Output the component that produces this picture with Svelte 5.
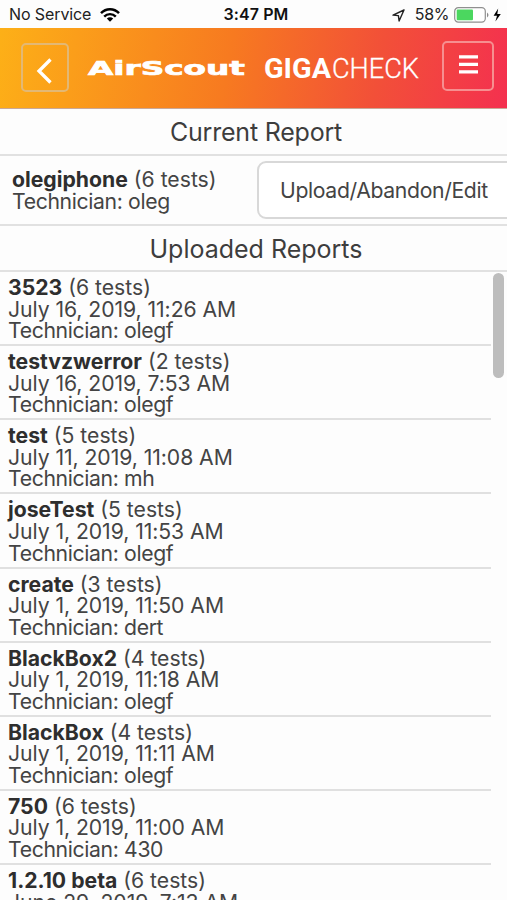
<script>
  const current = { name: 'olegiphone', tests: 6, technician: 'oleg' };

  const reports = [
    { name: '3523', tests: 6, date: 'July 16, 2019, 11:26 AM', technician: 'olegf' },
    { name: 'testvzwerror', tests: 2, date: 'July 16, 2019, 7:53 AM', technician: 'olegf' },
    { name: 'test', tests: 5, date: 'July 11, 2019, 11:08 AM', technician: 'mh' },
    { name: 'joseTest', tests: 5, date: 'July 1, 2019, 11:53 AM', technician: 'olegf' },
    { name: 'create', tests: 3, date: 'July 1, 2019, 11:50 AM', technician: 'dert' },
    { name: 'BlackBox2', tests: 4, date: 'July 1, 2019, 11:18 AM', technician: 'olegf' },
    { name: 'BlackBox', tests: 4, date: 'July 1, 2019, 11:11 AM', technician: 'olegf' },
    { name: '750', tests: 6, date: 'July 1, 2019, 11:00 AM', technician: '430' },
    { name: '1.2.10 beta', tests: 6, date: 'June 29, 2019, 7:13 AM', technician: 'olegf' },
  ];
</script>

<div class="screen">
  <div class="status-bar">
    <div class="carrier">
      <span>No Service</span>
      <svg width="20" height="14" viewBox="0 0 20 14">
        <path d="M1 5.2C6 0 14 0 19 5.2" fill="none" stroke="#000" stroke-width="2.5" />
        <path d="M4.2 8.6C7.4 5.3 12.6 5.3 15.8 8.6" fill="none" stroke="#000" stroke-width="2.4" />
        <path d="M6.8 10.6C8.6 8.8 11.4 8.8 13.2 10.6L10 13.8Z" />
      </svg>
    </div>
    <div class="time">3:47 PM</div>
    <div class="power">
      <svg class="location" width="13" height="13" viewBox="0 0 13 13">
        <path d="M12 1 1 6.1 6.4 6.6 7.1 12Z" fill="none" stroke="#222" stroke-width="1.4" stroke-linejoin="round" />
      </svg>
      <span class="percent">58%</span>
      <svg width="48" height="16" viewBox="0 0 48 16">
        <rect x=".7" y=".7" width="30.6" height="14.4" rx="3.6" fill="#fff" stroke="#8f8f8f" stroke-width="1.2" />
        <rect x="2.7" y="2.6" width="16.3" height="10.6" rx="1" fill="#4bd75f" />
        <path d="M33 5.5Q36 8 33 10.5Z" fill="#888" />
        <path d="M44.2 1.6 39.6 8.8H43L41.4 14.4 46.8 7H43.3Z" />
      </svg>
    </div>
  </div>

  <header>
    <button class="nav-btn back" aria-label="Back">
      <svg width="18" height="28" viewBox="0 0 18 28">
        <path d="M15.5 2.5 4 14 15.5 25.5" fill="none" stroke="#fff" stroke-width="3.3" />
      </svg>
    </button>
    <svg class="logo" width="336" height="40" viewBox="0 0 336 40">
      <text class="airscout" x="2" y="27" textLength="157" lengthAdjust="spacingAndGlyphs">AirScout</text>
      <text class="giga" x="178" y="30" textLength="67" lengthAdjust="spacingAndGlyphs">GIGA</text>
      <text class="check" x="246" y="30" textLength="87" lengthAdjust="spacingAndGlyphs">CHECK</text>
    </svg>
    <button class="nav-btn menu" aria-label="Menu">
      <svg width="19" height="19" viewBox="0 0 19 19">
        <path d="M0 1.9H19M0 9.4H19M0 16.9H19" stroke="#fff" stroke-width="3.4" />
      </svg>
    </button>
  </header>

  <h2>Current Report</h2>
  <div class="current">
    <div class="details">
      <div><b>{current.name}</b> ({current.tests} tests)</div>
      <div class="technician">Technician: {current.technician}</div>
    </div>
    <button class="action">Upload/Abandon/Edit</button>
  </div>

  <h2 class="uploaded">Uploaded Reports</h2>
  <div class="list">
    <div class="rows">
      {#each reports as report}
        <div class="report">
          <div><b>{report.name}</b> ({report.tests} tests)</div>
          <div class="date">{report.date}</div>
          <div class="technician">Technician: {report.technician}</div>
        </div>
      {/each}
    </div>
    <div class="scrollbar"></div>
  </div>
</div>

<style>
  :global(body) { background: #fdfdfd; }
  .screen {
    height: 900px;
    overflow: hidden;
    display: flex;
    flex-direction: column;
    background: #fdfdfd;
    color: #444;
    font-family: Inter, "Liberation Sans", sans-serif;
    font-size: 21.2px;
    line-height: 21.6px;
  }
  .status-bar {
    height: 28px;
    flex-shrink: 0;
    box-sizing: border-box;
    padding: 2px 5px 0 9px;
    display: grid;
    grid-template-columns: 1fr auto 1fr;
    align-items: center;
    font-size: 16px;
    color: #222;
  }
  .carrier { display: flex; align-items: center; gap: 9px; letter-spacing: -0.1px; }
  .time { color: #111; font-weight: 600; margin-left: 1px; letter-spacing: 0.1px; }
  .power { display: flex; align-items: center; justify-content: flex-end; }
  .location { margin-right: 10px; }
  .percent { margin-right: 5px; letter-spacing: -0.4px; }
  header {
    height: 81px;
    flex-shrink: 0;
    box-sizing: border-box;
    padding: 13px 13px 0 21px;
    display: flex;
    align-items: flex-start;
    background: linear-gradient(100deg, #fdb017 0%, #f77a20 45%, #f25038 74%, #f4304f 100%);
    border-bottom: 1px solid #c9a898;
  }
  .nav-btn {
    box-sizing: border-box;
    padding: 0;
    display: flex;
    align-items: center;
    justify-content: center;
    background: none;
    border-radius: 5px;
    flex-shrink: 0;
  }
  .back { width: 48px; height: 49px; margin-top: 2px; border: 2px solid #e3b874; padding: 6px 2px 0 0; }
  .menu { width: 52px; height: 50px; border: 2px solid #f68f90; margin-left: auto; padding-bottom: 3px; }
  .logo { margin: 7px 0 0 17px; flex-shrink: 0; fill: #fff; }
  .airscout { font: bold 20px "DejaVu Sans", sans-serif; stroke: #fff; stroke-width: .7px; }
  .giga { font: 700 27.5px Roboto, sans-serif; }
  .check { font: 300 27.5px Roboto, sans-serif; stroke: #fff; stroke-width: .3px; }
  h2 {
    height: 47px;
    flex-shrink: 0;
    box-sizing: border-box;
    margin: 0;
    padding: 1px 0 0 5px;
    border-bottom: 2px solid #e1e1e1;
    font-size: 25px;
    font-weight: 400;
    line-height: 44px;
    letter-spacing: -0.2px;
    text-align: center;
    color: #3d3d3d;
  }
  .current {
    height: 70px;
    flex-shrink: 0;
    box-sizing: border-box;
    padding-left: 12px;
    border-bottom: 2px solid #e1e1e1;
    display: flex;
    align-items: center;
    overflow: hidden;
  }
  .details { width: 245px; flex-shrink: 0; padding-top: 2px; }
  .action {
    width: 262px;
    height: 58px;
    flex-shrink: 0;
    box-sizing: border-box;
    padding: 1px 0 0 21px;
    background: #fff;
    border: 2px solid #d8d8d8;
    border-radius: 9px;
    font: inherit;
    letter-spacing: -0.36px;
    color: #444;
    text-align: left;
    white-space: nowrap;
  }
  b { font-weight: 700; color: #2e2e2e; }
  .date { letter-spacing: -0.06px; }
  .technician { letter-spacing: -0.36px; }
  .uploaded { height: 46px; letter-spacing: 0; }
  .list { flex: 1; min-height: 0; display: flex; align-items: flex-start; }
  .rows { width: 491px; }
  .report {
    height: 74.13px;
    box-sizing: border-box;
    padding: 5px 0 0 8px;
    border-bottom: 2px solid #e0e0e0;
    white-space: nowrap;
  }
  .scrollbar { width: 11px; height: 105px; margin: 1px 0 0 2px; border-radius: 6px; background: #bdbdbd; }
</style>
